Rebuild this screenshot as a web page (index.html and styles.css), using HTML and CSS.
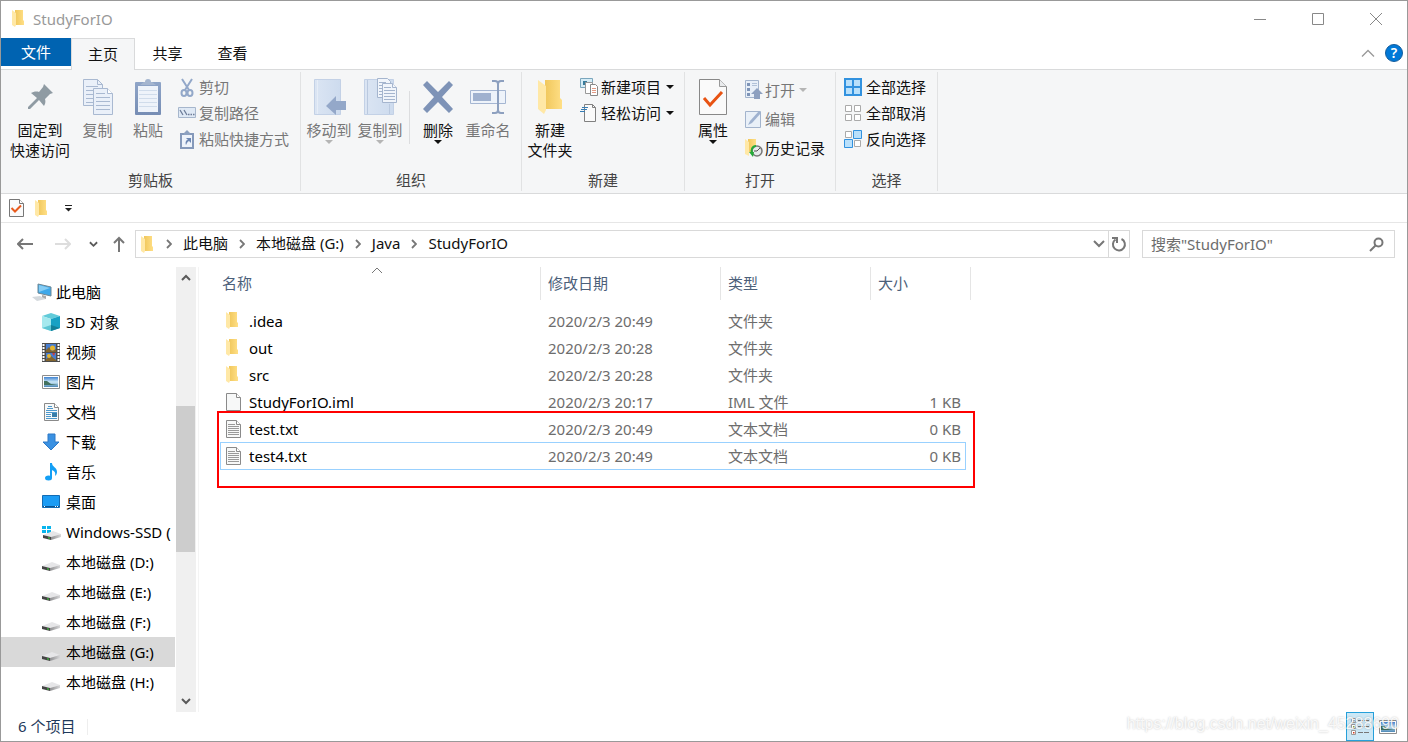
FILE: index.html
```html
<!DOCTYPE html>
<html lang="zh-CN">
<head>
<meta charset="utf-8">
<title>StudyForIO</title>
<link rel="stylesheet" href="styles.css">
</head>
<body>
<svg class="defs" aria-hidden="true">
  <defs>
    <linearGradient id="gold" x1="0" x2="1"><stop offset="0" stop-color="#f0c75c"/><stop offset="1" stop-color="#ffdf86"/></linearGradient>
    <linearGradient id="pale" x1="0" x2="1"><stop offset="0" stop-color="#dbe5f3"/><stop offset="1" stop-color="#cddbee"/></linearGradient>
    <linearGradient id="steel" x1="0" x2="0" y1="0" y2="1"><stop offset="0" stop-color="#8fa5c8"/><stop offset="1" stop-color="#768db4"/></linearGradient>
    <linearGradient id="metal" x1="0" x2="1"><stop offset="0" stop-color="#8d8d8f"/><stop offset="1" stop-color="#d6d6d8"/></linearGradient>
    <linearGradient id="sky" x1="0" x2="0" y1="0" y2="1"><stop offset="0" stop-color="#3f83d2"/><stop offset=".5" stop-color="#cbe7f6"/><stop offset="1" stop-color="#4b86b4"/></linearGradient>
    <symbol id="folder" viewBox="0 0 12 17"><path d="M3 0h8v10l1 1v4H3z" fill="url(#gold)"/><path d="M0 0l4 3v12l-1 2-3-2z" fill="#ffe8a6"/></symbol>
    <symbol id="page" viewBox="0 0 15 18"><path d="M.5.5h10l4 4v13H.5z" fill="#f7f8f8" stroke="#8a8a8a"/><path d="M10.500.5v4h4" fill="#fff" stroke="#8a8a8a"/></symbol>
    <symbol id="textpage" viewBox="0 0 15 18"><use href="#page"/><path d="M2 4.500h7M2 6.500h11M2 8.500h11M2 10.500h11M2 12.500h11M2 14.500h11" stroke="#999"/></symbol>
    <symbol id="checkpage" viewBox="0 0 15 18"><path d="M.5.5h10l4 4v13H.5z" fill="#fafafa" stroke="#777"/><path d="M10.500.5v4h4" fill="#fff" stroke="#777"/><path d="M2.500 9l3.500 3.500 6-6" fill="none" stroke="#e85a1c" stroke-width="2"/></symbol>
    <symbol id="disk" viewBox="0 0 18 9"><path d="M0 4L10 0l8 3-10 3z" fill="#e6e6e8"/><path d="M8 6l10-3v3L8 9z" fill="url(#metal)"/><path d="M0 4l8 2v3L0 7z" fill="#454545"/><path d="M5 6.300l2 .5v1l-2-.5z" fill="#35d435"/></symbol>
    <symbol id="chev-r" viewBox="0 0 6 10"><path d="M1 1l4 4-4 4" fill="none" stroke="#777" stroke-width="1.800"/></symbol>
    <symbol id="chev-d" viewBox="0 0 10 7"><path d="M1 1l4 4 4-4" fill="none" stroke="#5a5a5a" stroke-width="2"/></symbol>
    <symbol id="chev-u" viewBox="0 0 10 7"><path d="M1 6l4-4 4 4" fill="none" stroke="#5a5a5a" stroke-width="2"/></symbol>
    <symbol id="photo" viewBox="0 0 18 14"><path d="M.5.5h17v13H.5z" fill="#fff" stroke="#8d8d8d"/><path d="M2 2h14v10H2z" fill="url(#sky)"/><path d="M2 6h3l4 3 7 1H2z" fill="#41705e"/></symbol>
  </defs>
</svg>

<header class="titlebar">
  <svg class="folder" width="12" height="17"><use href="#folder"/></svg>
  <h1>StudyForIO</h1>
  <div class="window-buttons">
    <button aria-label="最小化"><svg width="14" height="14"><path d="M1 7.500h12" stroke="#888"/></svg></button>
    <button aria-label="最大化"><svg width="14" height="14"><path d="M1.500 1.500h11v11h-11z" fill="none" stroke="#888"/></svg></button>
    <button aria-label="关闭"><svg width="14" height="14"><path d="M1 1l12 12M13 1L1 13" stroke="#888"/></svg></button>
  </div>
</header>

<nav class="tabs">
  <button class="tab file">文件</button>
  <button class="tab active">主页</button>
  <button class="tab">共享</button>
  <button class="tab">查看</button>
  <div class="tabs-end">
    <button aria-label="折叠功能区"><svg width="14" height="8"><path d="M1 7.500l6-6 6 6" fill="none" stroke="#999" stroke-width="1.300"/></svg></button>
    <button class="help" aria-label="帮助">?</button>
  </div>
</nav>

<div class="ribbon">
  <section class="group clip">
    <div class="tools">
      <button class="big pin"><span class="pic"><svg width="26" height="26"><path d="M17 0l9 9-3 1-5 5c1 3 0 5-1 7l-5-6-9 9-2 0 0-2 9-9-6-5c2-1 5-2 8-1l4-5z" fill="#8f9ba3"/></svg></span>固定到<br>快速访问</button>
      <button class="big copy" disabled><span class="pic"><svg width="32" height="38" fill="#eaf0f9" stroke="#a9b9d1"><path d="M1.500 1.500h14l5 5v21h-19z"/><path d="M15.500 1.500v5h5M4 8.500h12M4 12.500h12M4 16.500h12M4 20.500h12M4 24.500h12" fill="none"/><path d="M11.500 10.500h14l5 5v21h-19z"/><path d="M25.500 10.500v5h5" fill="#fff"/><path d="M14 15.500h9M14 19.500h14M14 23.500h14M14 27.500h14M14 31.500h14"/></svg></span>复制</button>
      <button class="big paste" disabled><span class="pic"><svg width="28" height="38"><rect x="1" y="4" width="26" height="33" rx="1" fill="url(#steel)"/><path d="M4 8h20v26H4z" fill="#eef3fa"/><path d="M5 12.500h18M5 16.500h18M5 20.500h18M5 24.500h18M5 28.500h18" stroke="#d0dceb"/><path d="M6 7l4-3h1a3 3 0 0 1 6 0h1l4 3z" fill="#a4b5cf"/></svg></span>粘贴</button>
      <div class="small-tools">
        <button disabled><span class="ico"><svg width="14" height="19" fill="none" stroke="#93a8c9" stroke-width="2"><path d="M2 1l7 11M12 1L5 12"/><ellipse cx="4" cy="15" rx="2.500" ry="3"/><ellipse cx="10" cy="15" rx="2.500" ry="3"/></svg></span>剪切</button>
        <button disabled><span class="ico"><svg width="18" height="12"><path d="M.5.5h17v10H.5z" fill="#dfe9f5" stroke="#a6b6cc"/><path d="M2 3l3 5M6 3l3 5M10 7.500h1.500M12.500 7.500h1.500M15 7.500h1.500" stroke="#6d7c98" stroke-width="1.300"/></svg></span>复制路径</button>
        <button disabled><span class="ico"><svg width="14" height="19"><path d="M1 4h12v14H1z" fill="#eef3fa" stroke="#8599ba" stroke-width="2"/><path d="M4 3l3-3 3 3v2H4z" fill="#8da1c0"/><path d="M6 8h5v5l-2-2c-2 1-2 2-3 4-1-3 0-5 2-5z" fill="#6e88b3"/></svg></span>粘贴快捷方式</button>
      </div>
    </div>
    <h2>剪贴板</h2>
  </section>

  <section class="group organize">
    <div class="tools">
      <button class="big move" disabled><span class="pic"><svg width="34" height="38"><path d="M2.500 1.500h26v35h-26z" fill="url(#pale)" stroke="#c3d1e6"/><path d="M5.500 2v34" stroke="#e6edf7"/><path d="M14 28l10-10v5h10v9H24v5z" fill="#94a8c9"/></svg></span>移动到<i class="arrow"></i></button>
      <button class="big copyto" disabled><span class="pic"><svg width="34" height="38"><path d="M1.500 1.500h29v35h-29z" fill="url(#pale)" stroke="#c3d1e6"/><path d="M4.500 2v34M26.500 26v10" stroke="#bac9df"/><g fill="#f1f5fb" stroke="#a5b5ce"><path d="M14.500.5h10l3 3v16h-13z"/><path d="M16 4.500h7M16 7.500h10M16 10.500h10M16 13.500h10M16 16.500h10"/><path d="M19.500 5.500h10l4 4v15h-14z"/><path d="M29.500 5.500v4h4M21 9.500h7M21 12.500h11M21 15.500h11M21 18.500h11M21 21.500h11"/></g></svg></span>复制到<i class="arrow"></i></button>
      <div class="divider"></div>
      <button class="big delete"><span class="pic"><svg width="32" height="38"><path d="M1 7l4-4 11 11L27 3l4 4-11 12 11 12-4 4-11-11L5 35l-4-4 11-12z" fill="#7e93b7"/></svg></span>删除<i class="arrow"></i></button>
      <button class="big rename" disabled><span class="pic"><svg width="38" height="38"><path d="M1.500 12.500h35v13h-35z" fill="#eef3fa" stroke="#a5b6d2"/><path d="M4 15h18v8H4z" fill="#9fb1cf"/><path d="M23 3h3q3 0 3 3v26q0 3-3 3h-3M35 3h-3q-3 0-3 3v26q0 3 3 3h3" fill="none" stroke="#8da0bf" stroke-width="2"/></svg></span>重命名</button>
    </div>
    <h2>组织</h2>
  </section>

  <section class="group new">
    <div class="tools">
      <button class="big newfolder"><span class="pic"><svg width="24" height="34"><path d="M7 0h15v18l2 2v9H7z" fill="url(#gold)"/><path d="M0 0l8 6v24l-2 4-6-5z" fill="#ffe8a6"/></svg></span>新建<br>文件夹</button>
      <div class="small-tools">
        <button><span class="ico"><svg width="18" height="18"><path d="M.5.5h12v9H.5z" fill="#d6edf7" stroke="#7aa6bd"/><path d="M3 3h4v4H3z" fill="#387c9c"/><path d="M5.500 4.500h7v11h-7z" fill="#fff" stroke="#999"/><path d="M10.500 6.500h5l2 2v9h-7z" fill="#fff" stroke="#888"/><path d="M12 10.500h4M12 12.500h4M12 14.500h4" stroke="#e39a85"/></svg></span>新建项目<i class="arrow side"></i></button>
        <button><span class="ico"><svg width="18" height="18"><path d="M4.500.5h8l3 3v14h-11z" fill="#fafafa" stroke="#808080"/><path d="M12.500.5v3h3" fill="none" stroke="#808080"/><path d="M2 3.500h6M1 5.500h6M0 7.500h5" stroke="#377db4"/></svg></span>轻松访问<i class="arrow side"></i></button>
      </div>
    </div>
    <h2>新建</h2>
  </section>

  <section class="group open">
    <div class="tools">
      <button class="big props"><span class="pic"><svg width="30" height="38"><path d="M1.500 1.500h20l7 7v28h-27z" fill="#fafafa" stroke="#888"/><path d="M21.500 1.500v7h7" fill="#e9ebed" stroke="#999"/><path d="M6 20l6 7L24 14" fill="none" stroke="#e85313" stroke-width="3"/></svg></span>属性<i class="arrow"></i></button>
      <div class="small-tools wide">
        <button disabled><span class="ico"><svg width="18" height="19"><path d="M.5.5h13v17H.5z" fill="#e8eff8" stroke="#a3b4cd"/><path d="M2 3h3v3H2zM2 8h3v3H2zM2 13h3v3H2z" fill="#7e94b7"/><path d="M7 3.500h5M7 5.500h5" stroke="#b2c2d8"/><path d="M12 8l6 6h-3v5H9v-5H6z" fill="#8da0c0"/></svg></span>打开<i class="arrow side"></i></button>
        <button disabled><span class="ico"><svg width="18" height="18"><path d="M.5 1.500h15v16H.5z" fill="#e9f0f8" stroke="#a3b4cd"/><path d="M3 15l2-4L14 1l2 2-9 10z" fill="#9fb2d0"/></svg></span>编辑</button>
        <button><span class="ico"><svg width="18" height="18"><path d="M3 0h8v13H3z" fill="url(#gold)"/><path d="M0 0l4 3v14l-4-2z" fill="#ffe8a6"/><circle cx="12" cy="12" r="5" fill="#e7eaec" stroke="#777" stroke-width="1.500"/><path d="M12 12l3-3M12 12H9" stroke="#555"/><path d="M11 7c-4 0-5 4-4 7" fill="none" stroke="#25a93a" stroke-width="2"/><path d="M4 13h5l-1 5z" fill="#25a93a"/></svg></span>历史记录</button>
      </div>
    </div>
    <h2>打开</h2>
  </section>

  <section class="group select">
    <div class="tools">
      <div class="small-tools">
        <button><span class="ico"><svg width="18" height="18"><path d="M1 1h16v16H1z" fill="#b9e0fb" stroke="#3292df" stroke-width="2"/><path d="M9 1v16M1 9h16" stroke="#3292df" stroke-width="2"/></svg></span>全部选择</button>
        <button><span class="ico"><svg width="18" height="18" fill="#fff" stroke="#aaa"><path d="M1.500 1.500h6v6h-6zM10.500 1.500h6v6h-6zM1.500 10.500h6v6h-6zM10.500 10.500h6v6h-6z"/></svg></span>全部取消</button>
        <button><span class="ico"><svg width="18" height="18" fill="#fff" stroke="#aaa"><path d="M1.500 1.500h6v6h-6zM10.500 10.500h6v6h-6z"/><path d="M9.500.5h8v8h-8zM.5 9.500h8v8h-8z" fill="#b9e0fb" stroke="#3292df"/></svg></span>反向选择</button>
      </div>
    </div>
    <h2>选择</h2>
  </section>
</div>

<div class="quickbar">
  <button aria-label="属性"><svg width="15" height="18"><use href="#checkpage"/></svg></button>
  <button aria-label="新建文件夹"><svg width="12" height="17"><use href="#folder"/></svg></button>
  <button aria-label="自定义快速访问工具栏"><svg width="8" height="8"><path d="M0 1.500h7" stroke="#222"/><path d="M0 4h7L3.500 7.500z" fill="#222"/></svg></button>
</div>

<div class="addressbar">
  <div class="history">
    <button aria-label="后退"><svg width="16" height="12"><path d="M1 6h15M6 1L1 6l5 5" fill="none" stroke="#777" stroke-width="2"/></svg></button>
    <button aria-label="前进"><svg width="16" height="12"><path d="M0 6h15M10 1l5 5-5 5" fill="none" stroke="#ddd" stroke-width="2"/></svg></button>
    <button aria-label="最近位置"><svg width="9" height="7"><use href="#chev-d"/></svg></button>
    <button aria-label="上移"><svg width="12" height="16"><path d="M6 16V2M1 7l5-5 5 5" fill="none" stroke="#777" stroke-width="2"/></svg></button>
  </div>
  <div class="path">
    <svg class="folder" width="12" height="17"><use href="#folder"/></svg>
    <svg width="6" height="10"><use href="#chev-r"/></svg><a href="#">此电脑</a>
    <svg width="6" height="10"><use href="#chev-r"/></svg><a href="#">本地磁盘 (G:)</a>
    <svg width="6" height="10"><use href="#chev-r"/></svg><a href="#">Java</a>
    <svg width="6" height="10"><use href="#chev-r"/></svg><a href="#">StudyForIO</a>
    <button class="drop" aria-label="以前的位置"><svg width="12" height="8"><path d="M1 1l5 5 5-5" fill="none" stroke="#777" stroke-width="2"/></svg></button>
    <button class="refresh" aria-label="刷新"><svg width="16" height="16" fill="none" stroke="#777" stroke-width="2"><path d="M10.500 3a6 6 0 1 1-6 .5M1 2h5v5"/></svg></button>
  </div>
  <label class="search">
    <input type="text" placeholder='搜索"StudyForIO"' aria-label="搜索">
    <svg width="15" height="15" fill="none" stroke="#777"><circle cx="9.500" cy="5.500" r="4" stroke-width="2"/><path d="M7 8l-6 6" stroke-width="2"/></svg>
  </label>
</div>

<main>
  <aside>
    <ul class="tree">
      <li class="root"><a href="#"><span class="ico"><svg width="20" height="18"><path d="M6 1l13 3v9L6 10z" fill="#3da8ea" stroke="#6f8794"/><path d="M7 2l11 3-11 4z" fill="#86cdf5"/><path d="M10 12l4 1v3h-4z" fill="#aaa"/><path d="M0 14l8-1 6 3-9 2z" fill="#d4d9dd"/></svg></span>此电脑</a></li>
      <li><a href="#"><span class="ico"><svg width="18" height="18"><path d="M9 0l9 3-9 3-9-3z" fill="#62cbd9"/><path d="M0 3l9 3v12l-9-3z" fill="#a5e9ee"/><path d="M9 6l9-3v12l-9 3z" fill="#18a1c4"/><path d="M0 15l9-3v6z" fill="#5dc6d4"/><path d="M9 12l9 3-9 3z" fill="#137f98"/></svg></span>3D 对象</a></li>
      <li><a href="#"><span class="ico"><svg width="18" height="19"><path d="M0 0h18v19H0z" fill="#4c4c4c"/><path d="M1.500 1v18M16.500 1v18" stroke="#fff" stroke-width="2" stroke-dasharray="2 1"/><path d="M4 1h10v8H4zM4 10h10v8H4z" fill="#477ed0"/><path d="M4 7l3-3 3 4 4-2v3H4zM4 16l5-3 5 4v1H4z" fill="#82652f"/><circle cx="10.500" cy="5" r="2.500" fill="#e6b52d"/><circle cx="7" cy="13" r="2" fill="#e6b52d"/><path d="M10 10h3l-1 3z" fill="#d43a35"/></svg></span>视频</a></li>
      <li><a href="#"><span class="ico"><svg width="18" height="14"><use href="#photo"/></svg></span>图片</a></li>
      <li><a href="#"><span class="ico"><svg width="15" height="18"><use href="#page"/><path d="M4 3.500h4M3 5.500h6M2 7.500h11M2 9.500h11M2 11.500h5M2 13.500h5M2 15.500h11" stroke="#4c98cc"/><path d="M8 10h5v4H8z" fill="#377da9"/></svg></span>文档</a></li>
      <li><a href="#"><span class="ico"><svg width="18" height="18"><path d="M6 1h7v8h4l-8 8-8-8h5z" fill="#3a91e2" stroke="#2c78c6"/></svg></span>下载</a></li>
      <li><a href="#"><span class="ico"><svg width="18" height="18"><ellipse cx="6.500" cy="15" rx="3.500" ry="2.500" fill="#139ff5"/><path d="M8 0h2c0 4 5 4 5 9 0 2-1 3-2 4 1-4-1-5-3-6v8H8z" fill="#139ff5"/></svg></span>音乐</a></li>
      <li><a href="#"><span class="ico"><svg width="18" height="14"><path d="M.5.5h17v12H.5z" fill="#1b9cf4" stroke="#126cb4"/><path d="M1 11.500h16" stroke="#0a5391"/><path d="M2 11.500h1M13 11.500h1M15 11.500h1" stroke="#fff"/></svg></span>桌面</a></li>
      <li><a href="#"><span class="ico"><svg width="19" height="15"><path d="M0 1h4v3H0zM5 1h4v3H5zM0 5h4v3H0zM5 5h4v3H5z" fill="#08b5ed"/><svg x="1" y="6" width="18" height="9"><use href="#disk"/></svg></svg></span>Windows-SSD (</a></li>
      <li><a href="#"><span class="ico drive"><svg width="18" height="9"><use href="#disk"/></svg></span>本地磁盘 (D:)</a></li>
      <li><a href="#"><span class="ico drive"><svg width="18" height="9"><use href="#disk"/></svg></span>本地磁盘 (E:)</a></li>
      <li><a href="#"><span class="ico drive"><svg width="18" height="9"><use href="#disk"/></svg></span>本地磁盘 (F:)</a></li>
      <li class="current"><a href="#"><span class="ico drive"><svg width="18" height="9"><use href="#disk"/></svg></span>本地磁盘 (G:)</a></li>
      <li><a href="#"><span class="ico drive"><svg width="18" height="9"><use href="#disk"/></svg></span>本地磁盘 (H:)</a></li>
    </ul>
    <div class="scrollbar">
      <button aria-label="向上滚动"><svg width="10" height="7"><use href="#chev-u"/></svg></button>
      <div class="track"><div class="thumb"></div></div>
      <button aria-label="向下滚动"><svg width="10" height="7"><use href="#chev-d"/></svg></button>
    </div>
  </aside>
  <div class="files">
    <table>
      <colgroup><col class="c-name"><col class="c-date"><col class="c-type"><col class="c-size"></colgroup>
      <thead><tr><th>名称<svg class="sort" width="12" height="7"><path d="M1 6l5-5 5 5" fill="none" stroke="#777"/></svg></th><th>修改日期</th><th>类型</th><th>大小</th></tr></thead>
      <tbody>
        <tr><td><span class="name"><svg width="12" height="17"><use href="#folder"/></svg>.idea</span></td><td>2020/2/3 20:49</td><td>文件夹</td><td></td></tr>
        <tr><td><span class="name"><svg width="12" height="17"><use href="#folder"/></svg>out</span></td><td>2020/2/3 20:28</td><td>文件夹</td><td></td></tr>
        <tr><td><span class="name"><svg width="12" height="17"><use href="#folder"/></svg>src</span></td><td>2020/2/3 20:28</td><td>文件夹</td><td></td></tr>
        <tr><td><span class="name"><svg width="15" height="18"><use href="#page"/></svg>StudyForIO.iml</span></td><td>2020/2/3 20:17</td><td>IML 文件</td><td>1 KB</td></tr>
        <tr><td><span class="name"><svg width="15" height="18"><use href="#textpage"/></svg>test.txt</span></td><td>2020/2/3 20:49</td><td>文本文档</td><td>0 KB</td></tr>
        <tr class="focused"><td><span class="name"><svg width="15" height="18"><use href="#textpage"/></svg>test4.txt</span></td><td>2020/2/3 20:49</td><td>文本文档</td><td>0 KB</td></tr>
      </tbody>
    </table>
    <div class="highlight"></div>
  </div>
</main>

<footer>
  <span class="count">6 个项目</span>
  <div class="views">
    <button class="on" aria-label="详细信息"><svg width="18" height="17"><path d="M.5.5h4v4h-4zM.5 6.500h4v4h-4zM.5 12.500h4v4h-4z" fill="#fff" stroke="#999"/><path d="M2 2h1.500v1.500H2z" fill="#2b7fa5"/><path d="M2 8h1.500v1.500H2z" fill="#8aa64b"/><path d="M2 14h1.500v1.500H2z" fill="#d43b20"/><path d="M7 2.500h5M13 2.500h5M7 8.500h5M13 8.500h5M7 14.500h5M13 14.500h5" stroke="#777"/></svg></button>
    <button aria-label="大图标"><svg width="18" height="14"><use href="#photo"/></svg></button>
  </div>
  <span class="watermark">https://blog.csdn.net/weixin_45288690</span>
</footer>
</body>
</html>
```
FILE: styles.css
```css
* { box-sizing: border-box; }
body {
  margin: 0;
  height: 100vh;
  display: flex;
  flex-direction: column;
  border: 1px solid #999;
  background: #fff;
  color: #111;
  font: 15px/20px "Noto Sans", "Noto Sans CJK SC", sans-serif;
  overflow: hidden;
}
button { font: inherit; color: inherit; background: none; border: 0; padding: 0; white-space: nowrap; }
button:disabled { color: #777; }
a { color: inherit; text-decoration: none; }
svg { display: block; flex: none; }
h1, h2 { margin: 0; font-size: 15px; font-weight: 400; }
.defs { position: absolute; width: 0; height: 0; }

.titlebar { display: flex; align-items: center; height: 37px; padding: 0 2px 2px 11px; gap: 9px; flex: none; color: #999; }
.window-buttons { display: flex; margin-left: auto; }
.window-buttons button { width: 58px; height: 35px; display: grid; place-items: center; }

.tabs { display: flex; height: 32px; flex: none; border-bottom: 1px solid #d9dadb; }
.tab { width: 65px; height: 31px; padding-bottom: 2px; }
.tab.file { width: 70px; height: 28px; padding: 0; background: #0063b1; color: #fff; }
.tab.active { width: 64px; height: 32px; background: #f5f6f7; border: 1px solid #d9dadb; border-bottom: 0; }
.tabs-end { margin-left: auto; display: flex; align-items: center; gap: 10px; padding: 0 4px 2px 0; }
.help { width: 18px; height: 18px; border-radius: 50%; background: #0078d7; border: 1px solid #155d9c; color: #fff; font-size: 14px; font-weight: 600; line-height: 16px; }

.ribbon { display: flex; height: 124px; flex: none; background: #f5f6f7; border-bottom: 1px solid #d9dadb; padding: 2px 0; }
.group { display: flex; flex-direction: column; border-right: 1px solid #e1e2e3; }
.group h2 { text-align: center; line-height: 20px; color: #444; padding-bottom: 1px; }
.tools { display: flex; flex: 1; }
.big { display: flex; flex-direction: column; align-items: center; padding-top: 5px; line-height: 20px; }
.pic { height: 43px; display: grid; place-items: center; padding-bottom: 3px; }
.pin { width: 68px; }
.copy { width: 47px; }
.paste { width: 54px; }
.clip .tools { padding: 0 11px 0 5px; }
.clip .small-tools { padding-left: 3px; }
.clip .small-tools button { gap: 3px; }
.organize .tools { padding: 0 10px 0 3px; }
.move { width: 50px; }
.copyto { width: 52px; }
.divider { width: 1px; margin: 19px 1px 26px 3px; background: #dcdddf; }
.delete { width: 54px; }
.rename { width: 46px; }
.newfolder, .props { width: 56px; }
.new .small-tools { padding: 2px 10px 0 2px; }
.open .small-tools { padding: 3px 10px 0 4px; }
.select .small-tools { padding: 2px 11px 0 8px; }
.small-tools { display: flex; flex-direction: column; padding-top: 2px; }
.small-tools button { display: flex; align-items: center; gap: 2px; height: 26px; }
.small-tools.wide button { height: 29px; }
.new .small-tools button { gap: 3px; }
.select .small-tools button { gap: 4px; }
.ico { width: 18px; display: grid; place-items: center; flex: none; }
.arrow { width: 0; height: 0; border: 4px solid transparent; border-top: 4px solid currentColor; border-bottom: 0; }
button:disabled .arrow { color: #b5b5b5; }
.arrow.side { margin-left: 2px; }

.quickbar { display: flex; align-items: center; height: 29px; flex: none; border-bottom: 1px solid #e6e6e6; padding-left: 8px; gap: 11px; }
.quickbar button:last-child { margin-left: 7px; }

.addressbar { display: flex; align-items: center; height: 44px; flex: none; padding: 0 12px 2px 16px; }
.history { display: flex; align-items: center; width: 118px; flex: none; }
.history button { margin-right: 18px; }
.history button + button { margin-left: 4px; }
.history button:nth-child(3) { margin-left: 0; margin-right: 11px; }
.history button:last-child { margin-right: 0; }
.path { flex: 1; display: flex; align-items: center; height: 28px; border: 1px solid #d9d9d9; padding-left: 5px; color: #111; gap: 11px; }
.path a { padding-bottom: 2px; }
.path .folder { margin-right: 2px; }
.drop { margin-left: auto; }
.refresh { width: 21px; height: 26px; display: grid; place-items: center; border-left: 1px solid #d9d9d9; margin-left: -8px; }
.search { display: flex; align-items: center; width: 253px; height: 28px; margin-left: 12px; border: 1px solid #d9d9d9; padding: 0 10px 0 8px; }
.search input { flex: 1; min-width: 0; border: 0; padding: 0; font: inherit; outline: 0; }
.search input::placeholder { color: #6d6d6d; }

main { display: flex; flex: 1; min-height: 0; }
aside { display: flex; width: 198px; flex: none; border-right: 1px solid #f4f4f4; padding-right: 2px; }
.tree { list-style: none; margin: 0; padding: 10px 0 0; width: 174px; overflow: hidden; }
.tree a { display: flex; align-items: center; gap: 6px; height: 30px; padding-left: 41px; white-space: nowrap; color: #000; }
.tree .root a { padding-left: 31px; gap: 4px; }
.root .ico { width: 20px; }
.drive { padding-top: 8px; }
.tree .current { background: #d9d9d9; }
.scrollbar { display: flex; flex-direction: column; width: 20px; margin-left: 1px; background: #f0f0f0; }
.scrollbar button { height: 21px; display: grid; place-items: center; }
.track { flex: 1; display: flex; flex-direction: column; }
.track::before { content: ""; flex: 118; }
.track::after { content: ""; flex: 139; }
.thumb { flex: 146; background: #cdcdcd; margin-right: 1px; }

.files { flex: 1; position: relative; padding-left: 21px; }
table { border-collapse: separate; border-spacing: 0; table-layout: fixed; width: 751px; }
.c-name { width: 321px; }
.c-date { width: 180px; }
.c-type { width: 150px; }
.c-size { width: 100px; }
th { height: 33px; text-align: left; font-weight: 400; color: #4c607a; border-right: 1px solid #e5e5e5; padding: 0 0 2px 7px; }
th:first-child { padding-left: 2px; position: relative; }
.sort { position: absolute; top: 0; left: 151px; }
tbody::before { content: ""; display: block; height: 8px; }
tbody tr { position: relative; }
td { height: 27px; padding: 0 0 2px 7px; color: #6d6d6d; }
td:first-child { color: #000; padding-left: 6px; }
td:last-child { text-align: right; padding-right: 10px; }
.name { display: grid; grid-template-columns: 15px auto; gap: 8px; align-items: center; }
.focused::after { content: ""; position: absolute; inset: -1px 5px 0 0; border: 1px solid #99d1ff; }
.highlight { position: absolute; left: 18px; top: 144px; width: 758px; height: 77px; border: 2px solid #f00; }

footer { position: relative; display: flex; align-items: center; height: 29px; flex: none; padding-left: 17px; color: #1e395b; }
.count { padding: 0 12px 2px 0; }
.count::after { content: ""; display: inline-block; vertical-align: middle; height: 16px; margin-left: 12px; border-left: 1px solid #eee; }
.views { display: flex; margin-left: auto; padding-right: 5px; }
.views button { width: 28px; height: 29px; display: grid; place-items: center; }
.views .on { background: #cce8f6; border: 1px solid #26a0da; }
.watermark { position: absolute; right: 8px; top: 2px; font: 16px/20px "Liberation Sans", sans-serif; color: rgba(255, 255, 255, .85); text-shadow: 0 0 2px rgba(0, 0, 0, .25); }
```
